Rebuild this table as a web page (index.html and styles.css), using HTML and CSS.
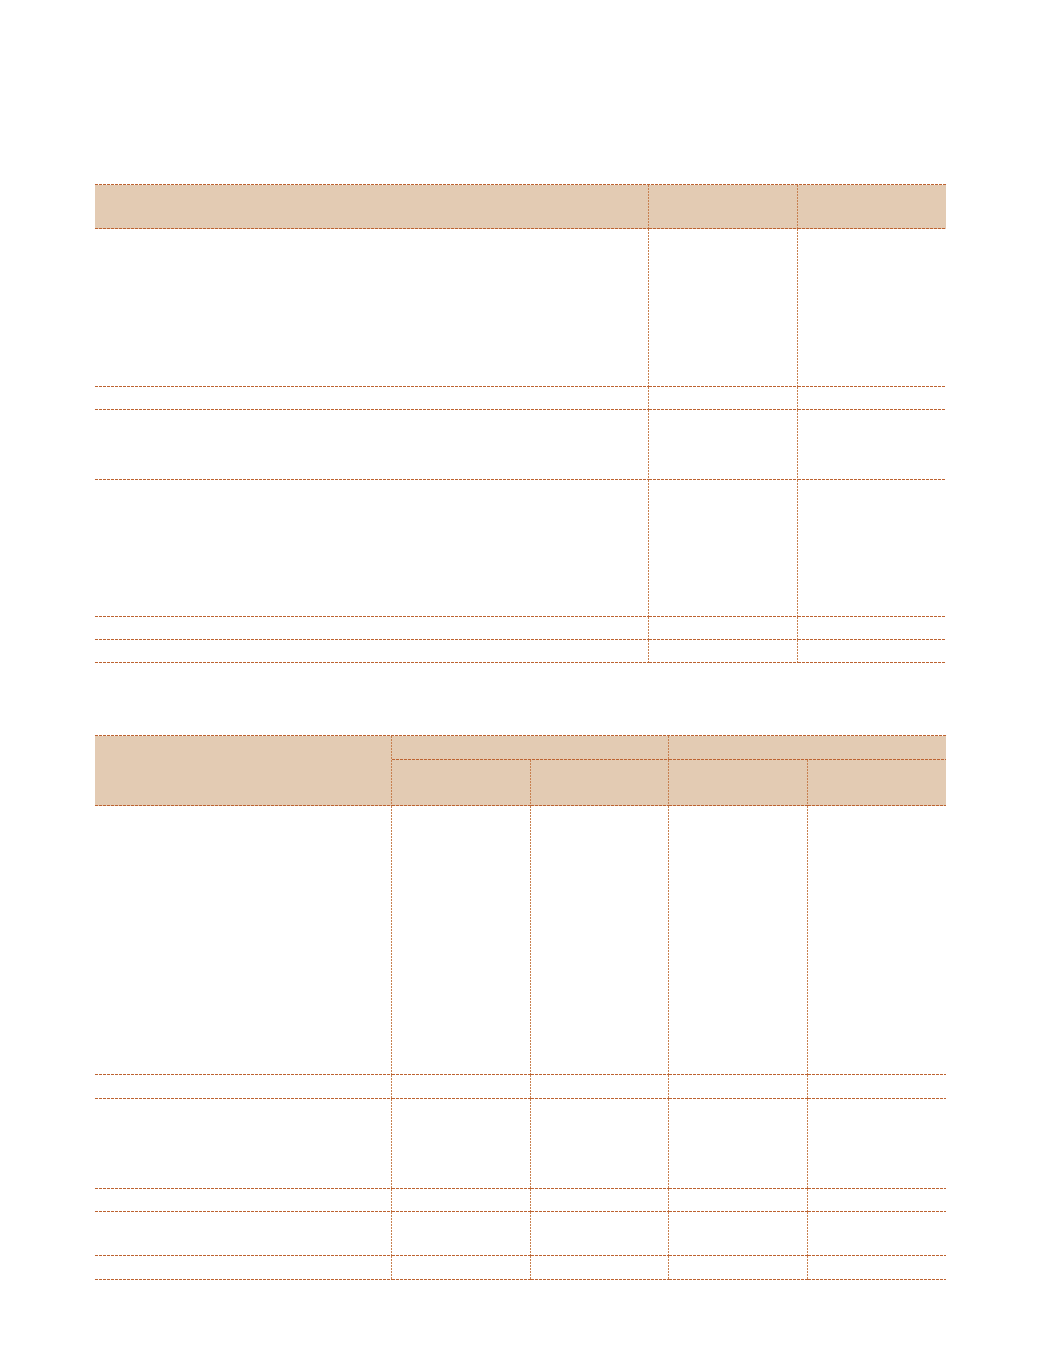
FILE: index.html
```html
<!DOCTYPE html>
<html>
<head>
<meta charset="utf-8">
<link rel="stylesheet" href="styles.css">
</head>
<body>
<div class="page">
  <div class="tbl t1">
    <div class="c hd"></div><div class="c hd"></div><div class="c hd last"></div>
    <div class="c"></div><div class="c"></div><div class="c last"></div>
    <div class="c"></div><div class="c"></div><div class="c last"></div>
    <div class="c"></div><div class="c"></div><div class="c last"></div>
    <div class="c"></div><div class="c"></div><div class="c last"></div>
    <div class="c"></div><div class="c"></div><div class="c last"></div>
    <div class="c"></div><div class="c"></div><div class="c last"></div>
  </div>

  <div class="tbl t2">
    <div class="c hd h-a"></div>
    <div class="c hd h-b"></div>
    <div class="c hd h-c last"></div>
    <div class="c hd"></div><div class="c hd"></div><div class="c hd"></div><div class="c hd last"></div>

    <div class="c"></div><div class="c"></div><div class="c"></div><div class="c"></div><div class="c last"></div>
    <div class="c"></div><div class="c"></div><div class="c"></div><div class="c"></div><div class="c last"></div>
    <div class="c"></div><div class="c"></div><div class="c"></div><div class="c"></div><div class="c last"></div>
    <div class="c"></div><div class="c"></div><div class="c"></div><div class="c"></div><div class="c last"></div>
    <div class="c"></div><div class="c"></div><div class="c"></div><div class="c"></div><div class="c last"></div>
    <div class="c"></div><div class="c"></div><div class="c"></div><div class="c"></div><div class="c last"></div>
  </div>
</div>
</body>
</html>
```

FILE: styles.css
```css
html, body {
  margin: 0;
  padding: 0;
  background: #ffffff;
  font-family: "Liberation Sans", Arial, sans-serif;
}

.page {
  width: 1039px;
  padding-top: 184px;
  padding-left: 95px;
  box-sizing: border-box;
}

.tbl {
  display: grid;
  width: 851px;
  padding-top: 1px;
  background-image: linear-gradient(to right, #bd6331 3px, transparent 3px);
  background-size: 4px 1px;
  background-repeat: repeat-x;
  background-position: left top;
}

.t1 {
  grid-template-columns: 554px 149px 148px;
  grid-template-rows: 44px 158px 23px 70px 137px 23px 23px;
}

.t2 {
  margin-top: 72px;
  grid-template-columns: 297px 139px 138px 139px 138px;
  grid-template-rows: 24px 46px 269px 24px 90px 23px 44px 24px;
}

.c {
  background-image:
    linear-gradient(to right, #bd6331 3px, transparent 3px),
    linear-gradient(to bottom, #c8804f 2px, transparent 2px);
  background-size: 4px 1px, 1px 3px;
  background-repeat: repeat-x, repeat-y;
  background-position: left bottom, right top;
}

.c.last {
  background-image: linear-gradient(to right, #bd6331 3px, transparent 3px);
  background-size: 4px 1px;
  background-repeat: repeat-x;
  background-position: left bottom;
}

.hd {
  background-color: #e3cbb3;
}

.h-a {
  grid-row: 1 / span 2;
  grid-column: 1;
}

.h-b {
  grid-row: 1;
  grid-column: 2 / span 2;
}

.h-c {
  grid-row: 1;
  grid-column: 4 / span 2;
}
```
